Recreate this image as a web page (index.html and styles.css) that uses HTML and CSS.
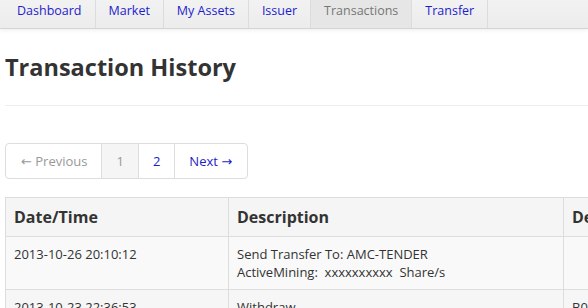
FILE: index.html
```html
<!DOCTYPE html>
<html>
<head>
<meta charset="utf-8">
<link rel="stylesheet" href="styles.css">
</head>
<body>
<nav class="navbar">
  <ul class="nav">
    <li><a href="#">Dashboard</a></li>
    <li><a href="#">Market</a></li>
    <li><a href="#">My Assets</a></li>
    <li><a href="#">Issuer</a></li>
    <li class="active"><a href="#">Transactions</a></li>
    <li><a href="#">Transfer</a></li>
  </ul>
</nav>
<main class="container">
  <h1 class="page-title">Transaction History</h1>
  <hr class="divider">
  <ul class="pager">
    <li class="disabled"><a href="#">&larr; Previous</a></li>
    <li class="current"><a href="#">1</a></li>
    <li><a href="#">2</a></li>
    <li><a href="#">Next &rarr;</a></li>
  </ul>
  <div class="table-wrap">
  <table class="history">
    <colgroup><col class="c-date"><col class="c-desc"><col class="c-dep"></colgroup>
    <thead>
      <tr><th>Date/Time</th><th>Description</th><th>Details</th></tr>
    </thead>
    <tbody>
      <tr><td>2013-10-26 20:10:12</td><td>Send Transfer To: AMC-TENDER<br>ActiveMining:&nbsp; <span class="amt">xxxxxxxxxx</span>&nbsp; Share/s</td><td></td></tr>
      <tr><td>2013-10-23 22:36:53</td><td>Withdraw</td><td>B0.00</td></tr>
    </tbody>
  </table>
  </div>
</main>
</body>
</html>
```
FILE: styles.css
```css
html, body { margin: 0; padding: 0; background: #fff; overflow: hidden; }
body { font-family: "Open Sans", "DejaVu Sans", sans-serif; color: #333; width: 588px; height: 308px; }

.navbar {
  height: 28px;
  background: linear-gradient(#f2f2f2, #ececec);
  border-bottom: 1px solid #d4d4d4;
  box-shadow: 0 1px 4px rgba(0,0,0,0.08);
}
.nav { list-style: none; margin: 0; padding: 0 0 0 4px; display: flex; height: 28px; }
.nav li { border-right: 1px solid #dcdcdc; display: flex; }
.nav li:first-child { margin-left: -4px; padding-left: 4px; }
.nav a {
  display: flex; align-items: center;
  padding: 0 13px 7px;
  font-size: 12.5px;
  color: #1d1dcc;
  text-decoration: none;
}
.nav li.active { background: #e6e6e6; }
.nav li.active a { color: #777; }

.container { padding: 0 0 0 5px; }
.page-title { margin: 0; padding-top: 24px; font-size: 23.5px; line-height: 28px; font-weight: 700; color: #333; }
.divider { margin: 24px 0 0; border: 0; border-top: 1px solid #eee; }

.pager {
  list-style: none; margin: 37px 0 0; padding: 0;
  display: inline-flex;
  border: 1px solid #ddd; border-radius: 4px;
  height: 34px;
}
.pager li { display: flex; border-left: 1px solid #ddd; }
.pager li:first-child { border-left: 0; }
.pager a { display: flex; align-items: center; padding: 0 14px; font-size: 13px; color: #1d1dcc; text-decoration: none; }
.pager li:first-child a { padding-left: 15px; }
.pager li:last-child a { padding-right: 15px; }
.pager li.disabled a { color: #999; }
.pager li.current { background: #f5f5f5; }
.pager li.current a { color: #999; }

.table-wrap { margin-top: 18px; }
.history { border-collapse: collapse; border: 1px solid #ddd; table-layout: fixed; width: 660px; }
.history th, .history td { border: 1px solid #ddd; text-align: left; vertical-align: top; }
.history th { background: #f5f5f5; font-size: 16px; font-weight: 700; height: 22px; line-height: 22px; padding: 8px; white-space: nowrap; }
.history td { font-size: 13px; line-height: 18px; padding: 8px; }
.history tbody tr:nth-child(odd) td { background: #f9f9f9; }
.history tbody tr:nth-child(even) td { background: #f6f6f6; }
.c-date { width: 223px; }
.c-desc { width: 335px; }
.c-dep { width: 102px; }
```
